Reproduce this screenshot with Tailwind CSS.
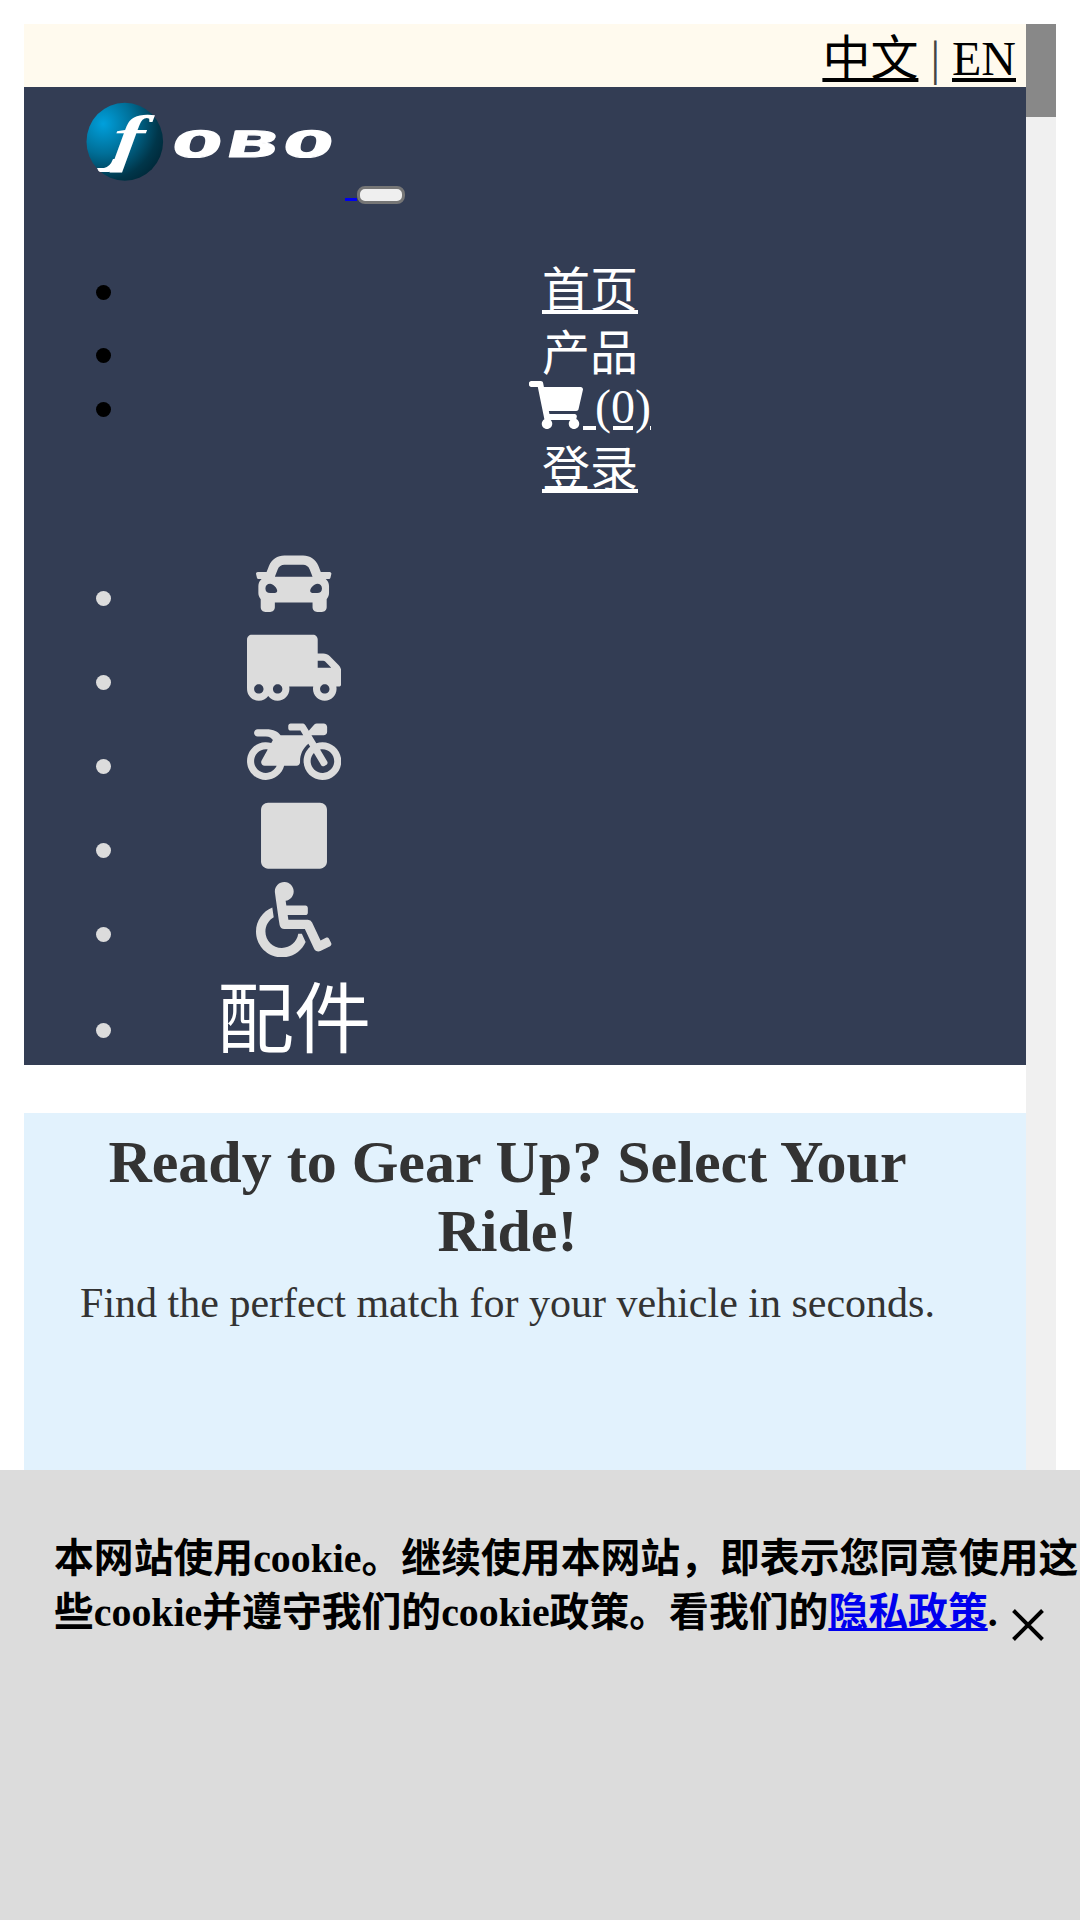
<!DOCTYPE html>
<html lang="zh">
<head>
<meta charset="utf-8">
<title>FOBO</title>
<script src="https://cdn.jsdelivr.net/npm/@tailwindcss/browser@4"></script>
</head>
<body class="h-[1920px] overflow-hidden bg-white font-['Liberation_Serif','Noto_Sans_CJK_SC',serif] text-black">
<div class="flex h-[1470px] pt-6 pl-6">
  <div class="flex w-[1002px] flex-col">
    <div class="h-[63px] shrink-0 bg-[#fffaee] pr-2.5 text-right text-[48px] leading-[69px]"><a class="underline">中文</a> <span class="text-[#444]">|</span> <a class="underline">EN</a></div>

    <header class="h-[978px] shrink-0 bg-[#333d54]">
      <div class="flex h-[120px] items-start pl-[60px]">
        <svg class="h-[96px] w-[261px] shrink-0 overflow-visible" viewBox="84 87 261 96">
          <defs>
            <radialGradient id="ball" cx="0.22" cy="0.27" r="0.85">
              <stop offset="0" stop-color="#00a0dc"/>
              <stop offset="0.45" stop-color="#006f98"/>
              <stop offset="0.85" stop-color="#00364a"/>
              <stop offset="1" stop-color="#002b3c"/>
            </radialGradient>
          </defs>
          <ellipse cx="124.800" cy="141.700" rx="38.300" ry="39" fill="url(#ball)"/>
          <text transform="translate(111 159) skewX(-6) scale(1.5 1)" font-family="Liberation Serif" font-style="italic" font-weight="bold" font-size="63" fill="#fff">f</text>
          <!-- swoosh under the mark -->
          <path d="M97 168h7q6-1 9-9l9 0q-4 13-13 13h-9q-2-1-3-4z" fill="#fff"/>
          <g font-family="DejaVu Sans Mono" font-weight="bold" font-size="36" fill="#fff" stroke="#fff" stroke-width="1.2" stroke-linejoin="round">
            <text transform="translate(169.500 156.500) skewX(-13) scale(2.3 1)">O</text>
            <text transform="translate(225 156.500) skewX(-13) scale(2.3 1)">B</text>
            <text transform="translate(280.500 156.500) skewX(-13) scale(2.3 1)">O</text>
          </g>
        </svg>
        <a class="mt-[111px] h-[3px] w-3 bg-[#0000ee]"></a>
        <button class="mt-[99px] h-[18px] w-12 rounded-lg border-[3px] border-[#767676] bg-[#efefef]" aria-label="menu"></button>
      </div>

      <ul class="mt-12 pl-[72px] text-[48px] text-white">
        <li class="flex h-[63px] leading-[71px]"><i class="mt-[30px] size-[15px] shrink-0 rounded-full bg-black"></i><span class="w-[958px] shrink-0 text-center"><a class="underline">首页</a></span></li>
        <li class="flex h-[63px] leading-[71px]"><i class="mt-[30px] size-[15px] shrink-0 rounded-full bg-black"></i><span class="w-[958px] shrink-0 text-center">产品</span></li>
        <li class="flex h-[54px] leading-[52px]"><i class="mt-[21px] size-[15px] shrink-0 rounded-full bg-black"></i>
          <span class="flex w-[958px] shrink-0 justify-center"><svg class="h-12 w-[54px]" viewBox="0 0 576 512" fill="currentColor"><path d="M528.12 301.319l47.273-208C578.806 78.301 567.391 64 551.99 64H159.208l-9.166-44.81C147.758 8.021 137.93 0 126.529 0H24C10.745 0 0 10.745 0 24v16c0 13.255 10.745 24 24 24h69.883l70.248 343.435C147.325 417.1 136 435.222 136 456c0 30.928 25.072 56 56 56s56-25.072 56-56c0-15.674-6.447-29.835-16.824-40h209.647C430.447 426.165 424 440.326 424 456c0 30.928 25.072 56 56 56s56-25.072 56-56c0-22.172-12.888-41.332-31.579-50.405l5.517-24.276c3.413-15.018-8.002-29.319-23.403-29.319H218.117l-6.545-32h293.145c11.206 0 20.92-7.754 23.403-18.681z"/></svg><a class="whitespace-pre underline"> (0)</a></span></li>
        <li class="flex h-[63px] leading-[69px]"><i class="size-[15px] shrink-0"></i><span class="w-[958px] shrink-0 text-center"><a class="underline">登录</a></span></li>
      </ul>

      <ul class="mt-12 pl-[72px] text-[#dcdcdc]">
        <li class="flex h-[84px]"><i class="mt-[45px] size-[15px] rounded-full bg-current"></i><span class="flex w-[366px] justify-center"><svg class="h-[75.400px] w-[75.400px]" viewBox="0 0 512 512" fill="currentColor"><path d="M499.99 176h-59.87l-16.64-41.6C406.38 91.63 365.57 64 319.5 64h-127c-46.06 0-86.88 27.63-103.99 70.4L71.87 176H12.01C4.2 176-1.53 183.34.37 190.91l6 24C7.7 220.25 12.5 224 18.01 224h20.07C24.65 235.73 16 252.78 16 272v48c0 16.12 6.16 30.67 16 41.93V416c0 17.67 14.33 32 32 32h32c17.67 0 32-14.33 32-32v-32h256v32c0 17.67 14.33 32 32 32h32c17.67 0 32-14.33 32-32v-54.07c9.84-11.25 16-25.8 16-41.93v-48c0-19.22-8.65-36.27-22.07-48H494c5.51 0 10.31-3.75 11.64-9.09l6-24c1.89-7.57-3.84-14.91-11.65-14.91zm-352.06-17.83c7.29-18.22 24.94-30.17 44.57-30.17h127c19.63 0 37.28 11.95 44.57 30.17L384 208H128l19.93-49.83zM96 319.8c-19.2 0-32-12.76-32-31.9S76.8 256 96 256s48 28.71 48 47.85-28.8 15.95-48 15.95zm320 0c-19.2 0-48 3.19-48-15.95S396.8 256 416 256s32 12.76 32 31.9-12.8 31.9-32 31.9z"/></svg></span></li>
        <li class="flex h-[84px]"><i class="mt-[45px] size-[15px] rounded-full bg-current"></i><span class="flex w-[366px] justify-center"><svg class="h-[75.400px] w-[94.300px]" viewBox="0 0 640 512" fill="currentColor"><path d="M621.3 237.3l-58.5-58.5c-12-12-28.3-18.7-45.3-18.7H480V64c0-17.7-14.3-32-32-32H32C14.3 32 0 46.3 0 64v336c0 44.2 35.8 80 80 80 26.3 0 49.4-12.9 64-32.4 14.6 19.6 37.7 32.4 64 32.4 44.2 0 80-35.8 80-80 0-5.5-.6-10.8-1.6-16h163.2c-1.1 5.2-1.6 10.5-1.6 16 0 44.2 35.8 80 80 80s80-35.8 80-80c0-5.5-.6-10.8-1.6-16H624c8.8 0 16-7.2 16-16v-85.5c0-17-6.7-33.2-18.7-45.2zM80 432c-17.6 0-32-14.4-32-32s14.4-32 32-32 32 14.4 32 32-14.4 32-32 32zm128 0c-17.6 0-32-14.4-32-32s14.4-32 32-32 32 14.4 32 32-14.4 32-32 32zm272-224h37.5c4.3 0 8.3 1.7 11.3 4.7l43.3 43.3H480v-48zm48 224c-17.6 0-32-14.4-32-32s14.4-32 32-32 32 14.4 32 32-14.4 32-32 32z"/></svg></span></li>
        <li class="flex h-[84px]"><i class="mt-[45px] size-[15px] rounded-full bg-current"></i><span class="flex w-[366px] justify-center"><svg class="h-[75.400px] w-[94.300px]" viewBox="0 0 640 512" fill="currentColor"><path d="M512.9 192c-14.9-.1-29.1 2.3-42.4 6.9L437.6 144H520c13.3 0 24-10.7 24-24V88c0-13.3-10.7-24-24-24h-45.3c-6.8 0-13.3 2.9-17.8 7.9l-37.5 41.7-22.8-38C392.2 68.4 384.4 64 376 64h-80c-8.8 0-16 7.2-16 16v16c0 8.8 7.2 16 16 16h66.4l19.2 32H227.9c-17.7-23.1-44.9-40-99.9-40H72.5C59 104 47.7 115 48 128.5c.2 13 10.9 23.5 24 23.5h56c24.5 0 38.7 10.9 47.8 24.8l-11.3 20.5c-13-3.9-26.9-5.7-41.3-5.2C55.9 194.5 1.6 249.6 0 317c-1.6 72.1 56.3 131 128 131 59.6 0 109.7-40.8 124-96h84.2c13.7 0 24.6-11.4 24-25.1-2.1-47.1 17.5-93.7 56.2-125l12.5 20.8c-27.6 23.7-45.1 58.9-44.8 98.2.5 69.6 57.2 126.5 126.8 127.1 71.6.7 129.8-57.5 129.2-129.1-.7-69.6-57.6-126.4-127.2-126.9zM128 400c-44.1 0-80-35.9-80-80s35.9-80 80-80c4.2 0 8.4.3 12.5 1L99 316.4c-8.8 16 2.8 35.6 21 35.6h81.3c-12.4 28.2-40.6 48-73.3 48zm463.9-75.6c-2.2 40.6-35 73.4-75.5 75.5-46.1 2.5-84.4-34.3-84.4-79.9 0-21.4 8.4-40.8 22.1-55.1l49.4 82.4c4.5 7.6 14.4 10 22 5.5l13.7-8.2c7.6-4.5 10-14.4 5.5-22l-48.6-80.9c5.2-1.1 10.5-1.6 15.9-1.6 45.6-.1 82.3 38.2 79.9 84.3z"/></svg></span></li>
        <li class="flex h-[84px]"><i class="mt-[45px] size-[15px] rounded-full bg-current"></i><span class="flex w-[366px] justify-center"><svg class="h-[75.400px] w-[66px]" viewBox="0 0 448 512" fill="currentColor"><path d="M400 32H48C21.500 32 0 53.500 0 80v352c0 26.500 21.500 48 48 48h352c26.500 0 48-21.500 48-48V80c0-26.500-21.500-48-48-48z"/></svg></span></li>
        <li class="flex h-[84px]"><i class="mt-[45px] size-[15px] rounded-full bg-current"></i><span class="flex w-[366px] justify-center"><svg class="h-[75.400px] w-[75.400px]" viewBox="0 0 512 512" fill="currentColor"><path d="M496.101 385.669l14.227 28.663c3.929 7.915.697 17.516-7.218 21.445l-65.465 32.886c-16.049 7.967-35.556 1.194-43.189-15.055L331.679 320H192c-15.925 0-29.426-11.71-31.679-27.475C126.433 55.308 128.38 70.044 128 64c0-36.358 30.318-65.635 67.052-63.929 33.271 1.545 60.048 28.905 60.925 62.201.868 32.933-23.152 60.423-54.608 65.039l4.67 32.69H336c8.837 0 16 7.163 16 16v32c0 8.837-7.163 16-16 16H215.182l4.572 32H352a32 32 0 0 1 28.962 18.392L438.477 396.8l36.178-18.349c7.915-3.929 17.517-.697 21.446 7.218zM311.358 352h-24.506c-7.788 54.204-54.528 96-110.852 96-61.757 0-112-50.243-112-112 0-41.505 22.694-77.809 56.324-97.156-3.712-25.965-6.844-47.86-9.488-66.333C45.956 198.464 0 261.963 0 336c0 97.047 78.953 176 176 176 71.87 0 133.806-43.308 161.11-105.192L311.358 352z"/></svg></span></li>
        <li class="flex h-[99px]"><i class="mt-[57px] size-[15px] rounded-full bg-current"></i><span class="w-[366px] text-center text-[77px] leading-[110px] text-white">配件</span></li>
      </ul>
    </header>

    <section class="mt-12 grow bg-[#e2f2fd] pt-[15px] pr-[35px] text-center text-[#333]">
      <h1 class="text-[60px] leading-[69px] font-bold">Ready to Gear Up? Select Your<br>Ride!</h1>
      <p class="mt-[13px] text-[42px] leading-[48px]">Find the perfect match for your vehicle in seconds.</p>
    </section>
  </div>
  <div class="w-[30px] bg-[#f0f0f0]"><div class="h-[93px] bg-[#888]"></div></div>
</div>

<div class="relative h-[450px] bg-[#dcdcdc] pt-[62px] pl-[54px] text-[39.850px] leading-[54px] font-bold whitespace-nowrap">
  <p>本网站使用cookie。继续使用本网站，即表示您同意使用这<br>些cookie并遵守我们的cookie政策。看我们的<a class="text-[#0000ee] underline">隐私政策</a>.</p>
  <svg class="absolute top-[139px] left-[1012px] size-8" viewBox="0 0 32 32" stroke="#000" stroke-width="4"><path d="M1.500 1.500l29 29M30.500 1.500l-29 29"/></svg>
</div>
</body>
</html>
